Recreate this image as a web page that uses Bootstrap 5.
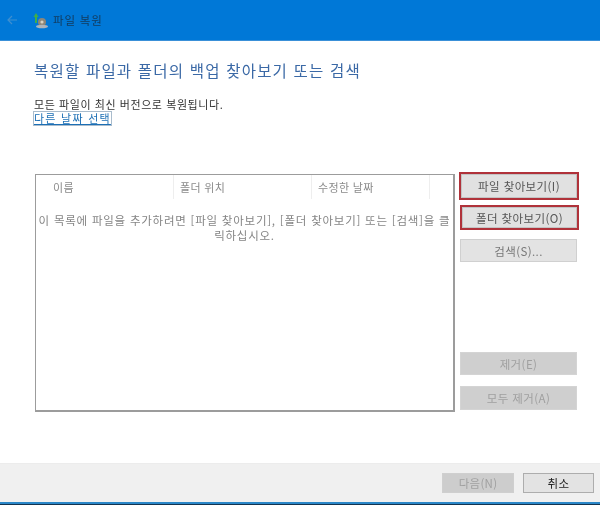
<!DOCTYPE html>
<html lang="ko"><head><meta charset="utf-8"><title>파일 복원</title>
<link href="https://cdn.jsdelivr.net/npm/bootstrap@5.3.0/dist/css/bootstrap.min.css" rel="stylesheet">
<style>
html,body{width:600px;height:505px;overflow:hidden;margin:0;background:#fff}
body{font-family:"Noto Sans CJK KR","Noto Sans",sans-serif;font-size:11px;line-height:14px;color:#222}
.wiz{height:505px;filter:blur(.45px)}
.wiz-head{height:41px;flex:none;background:#0078d7;padding-left:7px;gap:16px;border-bottom:1px solid #3a90d8;color:#123a5c}
.wiz-title{font-size:11.5px;letter-spacing:.8px;margin-left:-12px}
.wiz-body{padding:19px 21px 0 34px}
.wiz-h{font-size:15.5px;line-height:20px;color:#3b69a6;letter-spacing:1.2px;font-weight:400;margin:0 0 17px}
.wiz-line{letter-spacing:.57px;color:#333}
.wiz-link{color:#1c6fb5;text-decoration:underline;display:inline-block;outline:1px solid #a9bccd;letter-spacing:1.25px;line-height:13px;margin-top:1px}
.wiz-row{margin-top:48px;gap:4px;align-items:flex-start}
.file-box{width:420px;height:238px;margin-left:1px;margin-top:1px;border:1px solid #9c9c9c;border-right-width:2px;border-bottom-width:2px;color:#8a8a8a;flex:none}
.file-cols{height:24px}
.file-col{border-right:1px solid #eee;padding-top:5px;letter-spacing:.35px}
.c1{width:138px;padding-left:17px}.c2{width:138px;padding-left:6px}.c3{width:118px;padding-left:6px}
.file-msg{padding:14px 0 0;text-align:center;font-size:11.5px;line-height:15px;letter-spacing:.76px;color:#858585}
.side{width:120px;flex:none}
.wbtn{display:block;width:117px;height:23px;margin-left:1px;padding:0;font-size:11.5px;line-height:20px;background:#e3e3e3;border:1px solid #d0d0d0;border-radius:0;color:#777;letter-spacing:.4px}
.wbtn.hot{border:2px solid #b0323a;background:#e1e1e1;color:#555;box-shadow:inset 0 0 0 1px #c4c4c4}
.wbtn.hot-a{width:120px;height:28px;margin-left:0;margin-top:-1px}
.wbtn.hot-b{margin-top:5px;height:25px;width:119px}
.s-btn{margin-top:9px}
.wbtn.off:disabled{background:#cfcfcf;border-color:#d4d4d4;color:#a0a0a0;opacity:1}
.wbtn.off-a{margin-top:90px}
.wbtn.off-b{margin-top:11px;height:24px}
.wiz-foot{height:39px;flex:none;background:#f0f0f0;border-top:1px solid #ececec;padding:9px 6px 0 0;gap:9px;justify-content:flex-end;margin-top:auto}
.fbtn{width:72px;height:20px;padding:0;font-size:11.5px;line-height:17px;border-radius:0;letter-spacing:.3px}
.fbtn.f-off:disabled{background:#cdcdcd;border:1px solid #cfcfcf;color:#a0a0a0;opacity:1}
.fbtn.f-on{background:#e3e3e3;border:1px solid #adadad;color:#222;width:71px}
.wiz-edge{height:3px;background:#2b87c8;border-bottom:1px solid #12344f;flex:none}
</style></head><body>
<div class="wiz d-flex flex-column">
<div class="wiz-head d-flex align-items-center">
<svg width="10" height="10" viewBox="0 0 10 10"><path d="M10 5H1M5 1 1 5l4 4" fill="none" stroke="#3f8fcf" stroke-width="1.2"/></svg>
<svg width="16" height="17" viewBox="0 0 16 17"><circle cx="9" cy="10" r="4" fill="#8d8678"/><circle cx="9" cy="10" r="1.6" fill="#d8d2c2"/><ellipse cx="9" cy="14.500" rx="6" ry="1.8" fill="#aeb4ba"/><path d="M3 1 .5 5H2v6h2V5h1.500z" fill="#3fae49"/></svg>
<span class="wiz-title">파일 복원</span>
</div>
<div class="wiz-body">
<h1 class="wiz-h">복원할 파일과 폴더의 백업 찾아보기 또는 검색</h1>
<div class="wiz-line">모든 파일이 최신 버전으로 복원됩니다.</div>
<a class="wiz-link" href="#">다른 날짜 선택</a>
<div class="wiz-row d-flex">
<div class="file-box">
<div class="file-cols d-flex"><div class="file-col c1">이름</div><div class="file-col c2">폴더 위치</div><div class="file-col c3">수정한 날짜</div></div>
<div class="file-msg">이 목록에 파일을 추가하려면 [파일 찾아보기], [폴더 찾아보기] 또는 [검색]을 클<br>릭하십시오.</div>
</div>
<div class="side">
<button class="btn wbtn hot hot-a">파일 찾아보기(I)</button>
<button class="btn wbtn hot hot-b">폴더 찾아보기(O)</button>
<button class="btn wbtn s-btn">검색(S)...</button>
<button class="btn wbtn off off-a" disabled>제거(E)</button>
<button class="btn wbtn off off-b" disabled>모두 제거(A)</button>
</div>
</div>
</div>
<div class="wiz-foot d-flex">
<button class="btn fbtn f-off" disabled>다음(N)</button>
<button class="btn fbtn f-on">취소</button>
</div>
<div class="wiz-edge"></div>
</div>
</body></html>
